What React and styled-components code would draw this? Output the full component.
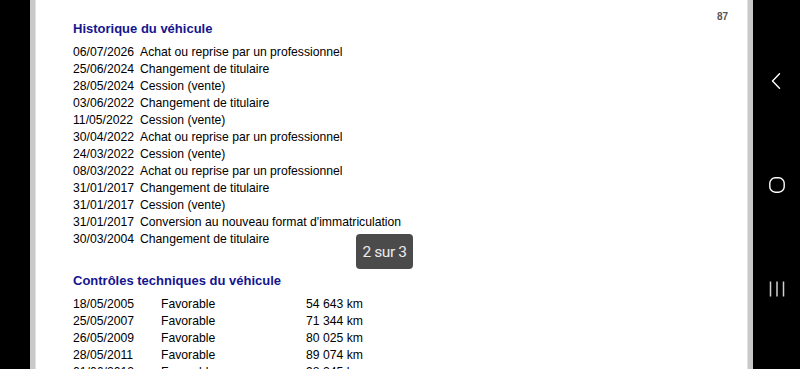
import React from 'react';
import styled, { createGlobalStyle } from 'styled-components';

const GlobalStyle = createGlobalStyle`
  html, body {
    margin: 0;
    padding: 0;
    height: 369px;
    overflow: hidden;
    background: #000;
  }
  body {
    font-family: "Liberation Sans", Arial, sans-serif;
  }
`;

const Screen = styled.div`
  display: flex;
  width: 800px;
  height: 369px;
  background: #000;
  overflow: hidden;
`;

const Gutter = styled.div`
  width: 30px;
  flex-shrink: 0;
  background: #000;
`;

const Viewer = styled.div`
  position: relative;
  flex: 1;
  display: flex;
  background: #c9c9c9;
  padding: 0 5px;
  overflow: hidden;
`;

const Page = styled.div`
  position: relative;
  flex: 1;
  background: #fff;
  padding: 20px 0 0 37px;
  border-left: 1px solid #e2e2e2;
  border-right: 1px solid #e2e2e2;
`;

const PageNumber = styled.div`
  position: absolute;
  top: 11px;
  right: 19px;
  font-size: 10px;
  font-weight: bold;
  color: #555;
`;

const Section = styled.section`
  & + & {
    margin-top: 24px;
  }
`;

const Heading = styled.h2`
  margin: 0 0 7px;
  font-size: 13px;
  line-height: 17px;
  font-weight: bold;
  color: #15158e;
`;

const Table = styled.div`
  display: grid;
  grid-template-columns: ${p => p.columns};
  font-size: 12.2px;
  line-height: 17px;
  color: #000;
`;

const Cell = styled.div`
  white-space: nowrap;
`;

const Toast = styled.div`
  position: absolute;
  left: 326px;
  top: 234px;
  width: 57px;
  height: 35px;
  display: flex;
  align-items: center;
  justify-content: center;
  background: #4b4b4b;
  border-radius: 4px;
  color: #ececec;
  font-family: Roboto, "Liberation Sans", sans-serif;
  font-size: 15.5px;
  letter-spacing: -0.4px;
`;

const NavBar = styled.nav`
  width: 47px;
  flex-shrink: 0;
  background: #000;
  display: flex;
  flex-direction: column;
  align-items: center;
  justify-content: center;
  gap: 88px;
  padding-top: 1px;
`;

const NavIcon = styled.svg`
  display: block;
  width: 16px;
  height: 16px;
`;

const history = [
  ['06/07/2026', 'Achat ou reprise par un professionnel'],
  ['25/06/2024', 'Changement de titulaire'],
  ['28/05/2024', 'Cession (vente)'],
  ['03/06/2022', 'Changement de titulaire'],
  ['11/05/2022', 'Cession (vente)'],
  ['30/04/2022', 'Achat ou reprise par un professionnel'],
  ['24/03/2022', 'Cession (vente)'],
  ['08/03/2022', 'Achat ou reprise par un professionnel'],
  ['31/01/2017', 'Changement de titulaire'],
  ['31/01/2017', 'Cession (vente)'],
  ['31/01/2017', "Conversion au nouveau format d'immatriculation"],
  ['30/03/2004', 'Changement de titulaire'],
];

const controles = [
  ['18/05/2005', 'Favorable', '54 643 km'],
  ['25/05/2007', 'Favorable', '71 344 km'],
  ['26/05/2009', 'Favorable', '80 025 km'],
  ['28/05/2011', 'Favorable', '89 074 km'],
  ['01/06/2013', 'Favorable', '98 345 km'],
];

const App = () => (
  <Screen>
    <GlobalStyle />
    <Gutter />
    <Viewer>
      <Page>
        <PageNumber>87</PageNumber>
        <Section>
          <Heading>Historique du véhicule</Heading>
          <Table columns="67px auto">
            {history.map(([date, label], i) => (
              <React.Fragment key={i}>
                <Cell>{date}</Cell>
                <Cell>{label}</Cell>
              </React.Fragment>
            ))}
          </Table>
        </Section>
        <Section>
          <Heading>Contrôles techniques du véhicule</Heading>
          <Table columns="88px 145px auto">
            {controles.map(([date, result, km], i) => (
              <React.Fragment key={i}>
                <Cell>{date}</Cell>
                <Cell>{result}</Cell>
                <Cell>{km}</Cell>
              </React.Fragment>
            ))}
          </Table>
        </Section>
      </Page>
      <Toast>2 sur 3</Toast>
    </Viewer>
    <NavBar>
      <NavIcon viewBox="0 0 16 16">
        <path d="M10.5 0.8 L3.5 8 L10.5 15.2" fill="none" stroke="#fff" strokeWidth="1.4" strokeLinecap="round" strokeLinejoin="round" />
      </NavIcon>
      <NavIcon viewBox="0 0 16 16">
        <rect x="0.8" y="0.8" width="14.4" height="14.4" rx="5.5" fill="none" stroke="#fff" strokeWidth="1.4" />
      </NavIcon>
      <NavIcon viewBox="0 0 16 16">
        <path d="M1.5 0.5 V15.5 M8 0.5 V15.5 M14.5 0.5 V15.5" fill="none" stroke="#d0d0d0" strokeWidth="1.5" />
      </NavIcon>
    </NavBar>
  </Screen>
);

export default App;
